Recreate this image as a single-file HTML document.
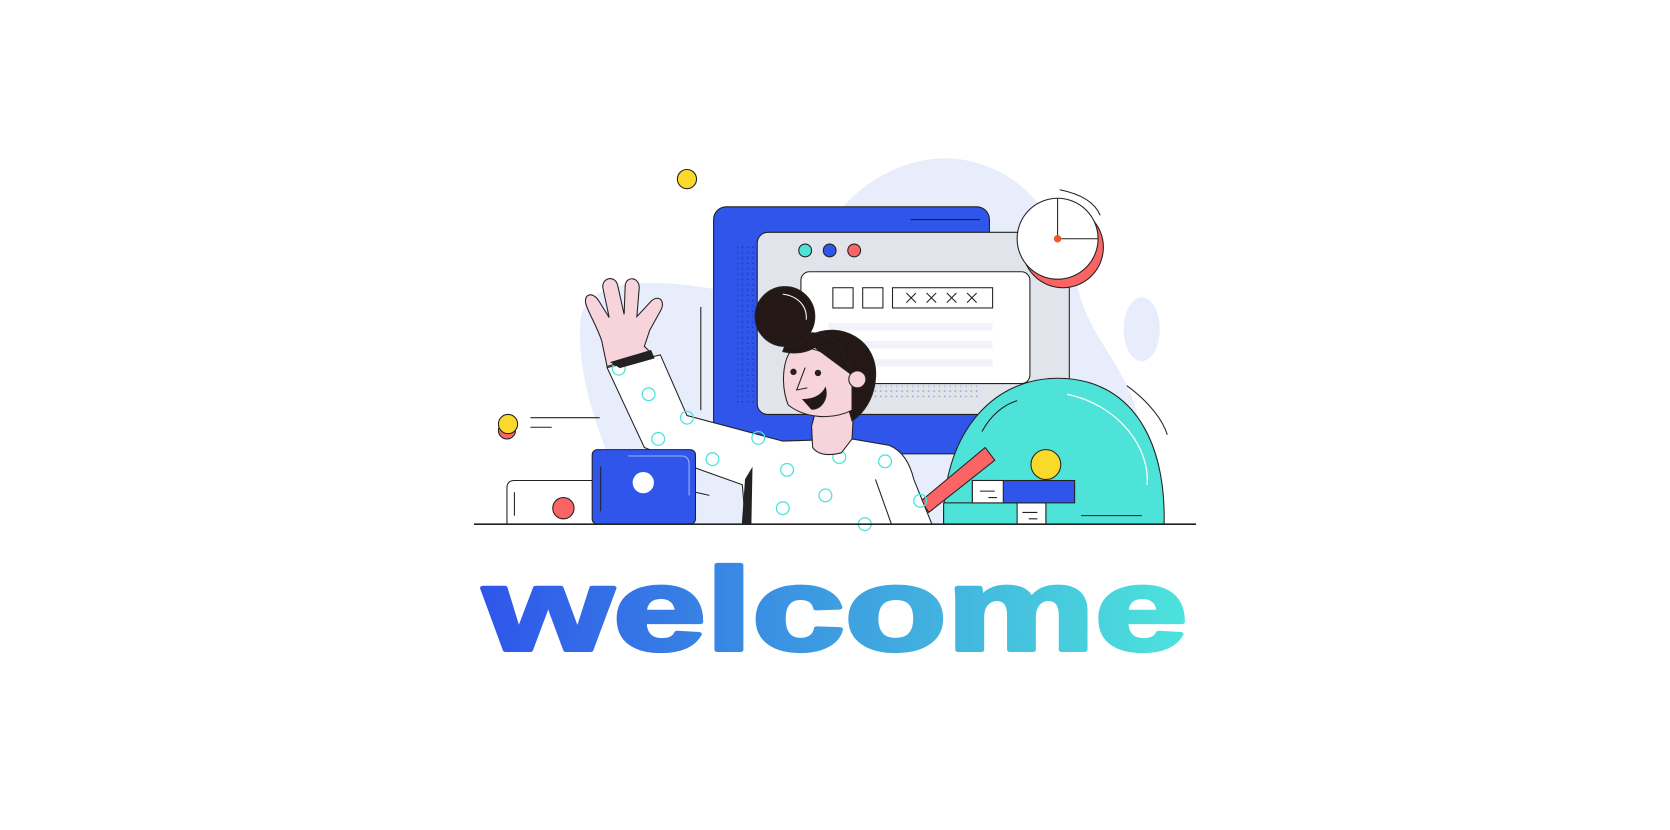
<!DOCTYPE html>
<html><head><meta charset="utf-8"><style>html,body{margin:0;padding:0;background:#fff;}svg{display:block}</style></head>
<body>
<svg width="1670" height="830" viewBox="0 0 1568 779" xmlns="http://www.w3.org/2000/svg">
<defs>
<linearGradient id="g" x1="452" y1="0" x2="1117" y2="0" gradientUnits="userSpaceOnUse">
<stop offset="0" stop-color="#2f55ea"/><stop offset="0.5" stop-color="#3d9ee0"/><stop offset="1" stop-color="#4de4dc"/></linearGradient>
<pattern id="dots" width="5" height="5" patternUnits="userSpaceOnUse"><circle cx="2" cy="2" r="0.8" fill="#1c3bb0"/></pattern>
</defs>
<g stroke="#222" stroke-width="1">
<path d="M545 300 C550 262 610 258 690 275 L760 250 C780 180 850 140 905 150 C960 160 990 200 1010 260 C1020 320 1060 340 1070 400 L1090 492 L600 492 C570 430 540 360 545 300Z" fill="#e8edfc" stroke="none"/>
<ellipse cx="1072" cy="309" rx="17" ry="30" fill="#e8edfc" stroke="none"/>
<circle cx="645" cy="168" r="9" fill="#f9d92a"/>
<rect x="670" y="194" width="259" height="232" rx="12" fill="#2f55ea"/>
<rect x="692" y="230" width="20" height="150" fill="url(#dots)" stroke="none"/>
<line x1="855" y1="206" x2="920" y2="206"/>
<rect x="711" y="218" width="293" height="171" rx="10" fill="#e1e4ea"/>
<rect x="820" y="362" width="100" height="12" fill="url(#dots)" stroke="none" opacity=".4"/>
<circle cx="756" cy="235" r="6" fill="#4de3d9"/><circle cx="779" cy="235" r="6" fill="#2f55ea"/><circle cx="802" cy="235" r="6" fill="#fa6464"/>
<rect x="752" y="255" width="215" height="105" rx="8" fill="#fff"/>
<rect x="782" y="270" width="19" height="19" fill="#fff"/><rect x="810" y="270" width="19" height="19" fill="#fff"/>
<rect x="838" y="270" width="94" height="19" fill="#fff"/>
<g stroke="none" fill="#f1f3f8"><rect x="778" y="303" width="154" height="7"/><rect x="778" y="320" width="154" height="7"/><rect x="778" y="337" width="154" height="7"/></g>
<path d="M851 275l9 9m0-9l-9 9M870 275l9 9m0-9l-9 9M889 275l9 9m0-9l-9 9M908 275l9 9m0-9l-9 9"/>
<circle cx="998" cy="232" r="38" fill="#fa6464"/>
<circle cx="993" cy="224" r="38" fill="#fff"/>
<path d="M993 186V224H1031" fill="none"/>
<circle cx="993" cy="224" r="3.5" fill="#f0572a" stroke="none"/>
<path d="M995 178C1015 182 1028 190 1033 202" fill="none"/>
<line x1="658" y1="288" x2="658" y2="385"/>
<circle cx="476" cy="404" r="8" fill="#fa6464"/><circle cx="477" cy="398" r="9" fill="#f9d92a"/>
<line x1="498" y1="392" x2="563" y2="392"/><line x1="498" y1="401" x2="518" y2="401"/>
<path d="M476 492V458Q476 451 483 451H560V492" fill="#fff"/>
<line x1="483" y1="462" x2="483" y2="484"/>
<circle cx="529" cy="477" r="10" fill="#fa6464"/>
<path d="M886 492C884 410 930 355 993 355C1060 355 1095 410 1093 492Z" fill="#4de3d9"/>
<path d="M1002 370C1050 380 1080 420 1077 455" fill="none" stroke="#fff" stroke-width="1.2"/>
<path d="M922 405C930 390 942 380 955 376" fill="none"/>
<path d="M1058 362C1080 378 1092 395 1096 408" fill="none"/>
<line x1="1015" y1="484" x2="1072" y2="484"/>
<path d="M865 470L925 420L934 432L872 481Z" fill="#fa6464"/>
<rect x="886" y="472" width="96" height="20" fill="#4de3d9"/>
<rect x="955" y="472" width="27" height="20" fill="#fff"/>
<rect x="913" y="451" width="96" height="21" fill="#2f55ea"/>
<rect x="913" y="451" width="29" height="21" fill="#fff"/>
<path d="M920 461h14M928 467h8M960 481h14M966 487h8" />
<circle cx="982" cy="436" r="14" fill="#f9d92a"/>
<path d="M570 345L620 333L645 390L735 414L800 412L835 418Q852 425 858 450L875 492H700L697 455L655 440L605 420Z" fill="#fff"/>
<path d="M697 492L700 450L706 440L705 492Z" fill="#222"/>
<line x1="822" y1="450" x2="837" y2="492"/>
<line x1="653" y1="462" x2="666" y2="465"/>
<g fill="none" stroke="#4de3d9" stroke-width="1.2">
<circle cx="581" cy="346" r="6"/><circle cx="609" cy="370" r="6"/><circle cx="618" cy="412" r="6"/><circle cx="645" cy="392" r="6"/><circle cx="712" cy="411" r="6"/><circle cx="669" cy="431" r="6"/><circle cx="739" cy="441" r="6"/><circle cx="775" cy="465" r="6"/><circle cx="735" cy="477" r="6"/><circle cx="831" cy="433" r="6"/><circle cx="864" cy="470" r="6"/><circle cx="788" cy="429" r="6"/><circle cx="812" cy="492" r="6"/></g>
<path d="M570 344L565 320C560 305 553 295 550 285C548 275 557 274 562 282L572 298L566 270C565 260 578 258 580 268L586 295L587 268C588 258 602 260 600 272L598 297L612 282C620 276 625 284 620 292L610 310L605 325L611 331Z" fill="#f7d4dc"/>
<path d="M574 340L611 329L614 336L582 345Z" fill="#222"/>
<path d="M762 400L763 420Q770 430 790 425L800 412L802 375L770 370Z" fill="#f7d4dc"/>
<path d="M760 315C790 300 825 320 822 355C820 380 805 392 800 395L790 360Z" fill="#231815"/>
<path d="M742 330C760 320 785 335 800 350L800 385C780 395 755 392 740 380C733 362 735 340 742 330Z" fill="#f7d4dc"/>
<path d="M735 330C740 310 770 305 790 325L800 352L765 326C755 332 744 332 735 330Z" fill="#231815"/>
<circle cx="737" cy="297" r="28" fill="#231815"/>
<path d="M735 276C750 278 758 288 757 300" fill="none" stroke="#fff"/>
<circle cx="805" cy="356" r="8" fill="#f7d4dc"/>
<circle cx="745" cy="349" r="2.5" fill="#222"/><circle cx="768" cy="350" r="2.5" fill="#222"/>
<path d="M756 345L748 366L758 364" fill="none"/>
<path d="M754 375C765 375 772 370 775 364C778 375 770 385 762 384Z" fill="#231815"/>
<rect x="556" y="422" width="97" height="70" rx="5" fill="#2f55ea"/>
<path d="M590 428H640Q647 428 647 436V465" fill="none" stroke="#9fb3ff"/>
<line x1="564" y1="438" x2="564" y2="480"/>
<ellipse cx="604" cy="453" rx="10" ry="10" fill="#fff" stroke="none"/>
<line x1="445" y1="492" x2="1123" y2="492" stroke-width="1.5"/>
</g>
<text x="454" y="610" font-family="Liberation Sans, sans-serif" font-weight="bold" font-size="110" textLength="661" lengthAdjust="spacingAndGlyphs" fill="url(#g)" stroke="url(#g)" stroke-width="4" stroke-linejoin="round">welcome</text>
</svg>
</body></html>
